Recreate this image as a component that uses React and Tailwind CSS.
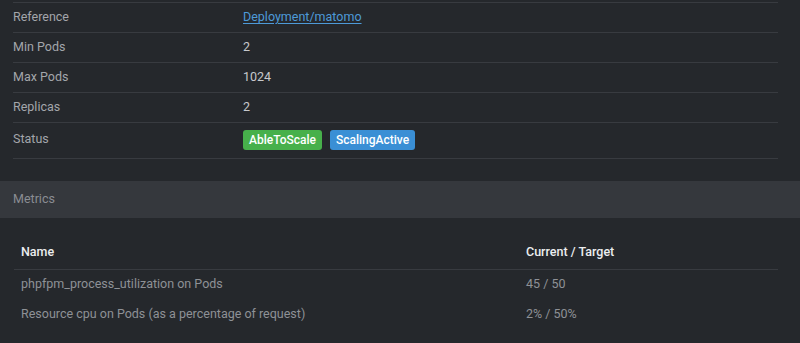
export default function App() {
  const rows = [
    { label: 'Reference', value: <a href="#" className="text-[#4d9ad8] underline underline-offset-2">Deployment/matomo</a> },
    { label: 'Min Pods', value: '2' },
    { label: 'Max Pods', value: '1024' },
    { label: 'Replicas', value: '2' },
  ]
  const metrics = [
    { name: 'phpfpm_process_utilization on Pods', value: '45 / 50' },
    { name: 'Resource cpu on Pods (as a percentage of request)', value: '2% / 50%' },
  ]

  return (
    <div className="w-[800px] h-[343px] overflow-hidden bg-[#25282c] font-['Roboto',sans-serif] text-[12.5px]">
      <div className="pt-[2px] pl-[13px] pr-[22px]">
        <div className="border-t border-[#383b40]">
          {rows.map((r) => (
            <div key={r.label} className="flex items-center h-[30px] border-b border-[#383b40]">
              <div className="w-[230px] text-[#a3a6ab]">{r.label}</div>
              <div className="text-[#c7c9cc]">{r.value}</div>
            </div>
          ))}
          <div className="flex items-start h-[36px] pt-[7px] border-b border-[#383b40]">
            <div className="w-[230px] text-[#a3a6ab] leading-[16px] pt-[1px]">Status</div>
            <div className="flex gap-[8px]">
              <span className="bg-[#47b04b] text-white text-[12px] font-medium rounded-[3px] px-[6px] h-[20px] leading-[20px]">AbleToScale</span>
              <span className="bg-[#3a8fd5] text-white text-[12px] font-medium rounded-[3px] px-[6px] h-[20px] leading-[20px]">ScalingActive</span>
            </div>
          </div>
        </div>
      </div>

      <div className="mt-[22px] h-[37px] bg-[#35383d] flex items-center px-[13px] text-[#8a8d93]">Metrics</div>

      <div className="pt-[19px] pl-[14px] pr-[22px]">
        <table className="w-full border-collapse">
          <thead>
            <tr className="h-[32px] border-b border-[#383b40]">
              <th className="w-[505px] text-left font-medium text-[#eceef0] px-[7px]">Name</th>
              <th className="text-left font-medium text-[#eceef0] px-[7px]">Current / Target</th>
            </tr>
          </thead>
          <tbody>
            {metrics.map((m) => (
              <tr key={m.name} className="h-[30px]">
                <td className="px-[7px] text-[#8e9196]">{m.name}</td>
                <td className="px-[7px] text-[#8e9196]">{m.value}</td>
              </tr>
            ))}
          </tbody>
        </table>
      </div>
    </div>
  )
}
